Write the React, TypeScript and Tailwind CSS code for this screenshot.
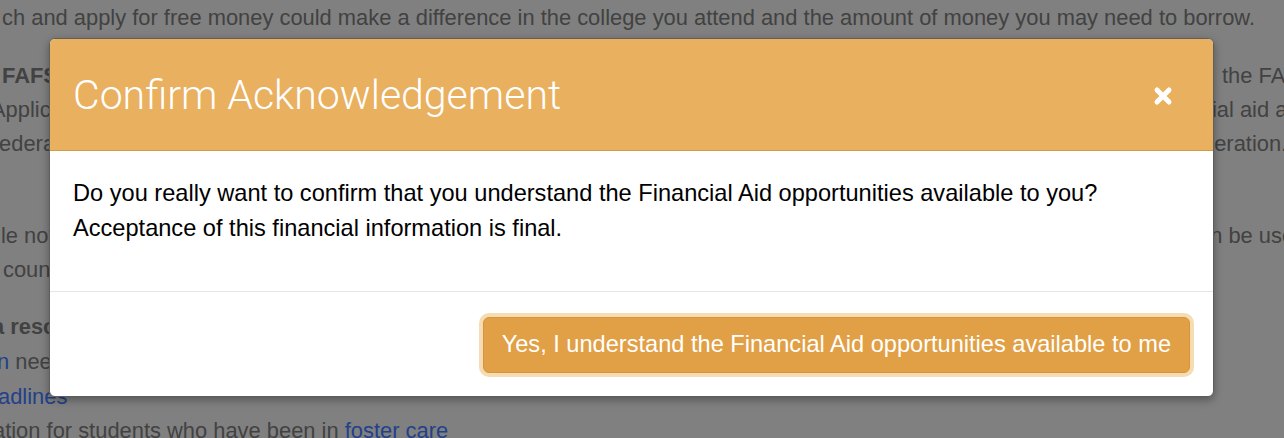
import React from "react";

const F = { fontFamily: '"Liberation Sans", Arial, sans-serif' };
const R = { fontFamily: 'Roboto, "Liberation Sans", Arial, sans-serif' };

function Row({ left, right, className = "" }: { left?: React.ReactNode; right?: React.ReactNode; className?: string }) {
  return (
    <div className={"h-[34px] leading-[34px] flex justify-between whitespace-nowrap " + className}>
      <div className="w-[49px] overflow-hidden">{left}</div>
      {right}
    </div>
  );
}

export default function App() {
  return (
    <div className="relative w-[1284px] h-[438px] overflow-hidden bg-[#808080] text-[#424242]" style={F}>
      {/* Background page (dimmed) */}
      <div className="flex flex-col text-[21.9px]">
        <div className="h-[34px] leading-[34px] mt-[1px] pl-[2px] whitespace-nowrap">
          ch and apply for free money could make a difference in the college you attend and the amount of money you may need to borrow.
        </div>
        <Row
          className="mt-[24px]"
          left={<span className="font-bold pl-[2px]">FAFSA</span>}
          right={<span className="w-[62px] overflow-hidden">the FAFSA</span>}
        />
        <Row
          left={<span className="block -ml-[9px]">Application</span>}
          right={<span className="w-[83px] overflow-hidden">cial aid and</span>}
        />
        <Row
          left={<span className="block -ml-[7px]">federal</span>}
          right={<span className="w-[82px] overflow-hidden">deration.</span>}
        />
        <Row
          className="mt-[58px]"
          left={<span className="block pl-[1px]">le not</span>}
          right={<span className="w-[86px] overflow-hidden">an be used</span>}
        />
        <Row left={<span className="block pl-[3px]">counsel</span>} />
        <Row
          className="mt-[23px]"
          left={<span className="block font-bold -ml-[8px]">a resources</span>}
        />
        <Row
          className="mt-[1px]"
          left={
            <span className="block -ml-[3px]">
              <span className="text-[#23418a]">n</span> needs
            </span>
          }
        />
        <div className="h-[34px] leading-[34px] mt-[1px] whitespace-nowrap">
          <span className="text-[#23418a] -ml-[2px]">adlines</span>
        </div>
        <div className="h-[34px] leading-[34px] whitespace-nowrap">
          <span className="-ml-[7px]">ation for students who have been in </span>
          <span className="text-[#23418a]">foster care</span>
        </div>
      </div>

      {/* Modal */}
      <div className="absolute left-[49px] top-[38px] w-[1165px] rounded-[6px] border border-[#5e5e5e] bg-white overflow-hidden shadow-[0_3px_9px_rgba(0,0,0,0.35)]">
        <div className="h-[112px] bg-[#e8b05f] border-b border-[#d39a4a] flex items-center justify-between pl-[23px] pr-[40px]">
          <h2 className="text-[41px] leading-none text-white font-light pt-[2px]" style={R}>
            Confirm Acknowledgement
          </h2>
          <svg width="20" height="20" viewBox="0 0 20 20" className="mt-[2px]">
            <path d="M4 4 L16 16 M16 4 L4 16" stroke="white" strokeWidth="5" strokeLinecap="round" />
          </svg>
        </div>
        <div className="h-[141px] border-b border-[#e5e5e5] pl-[23px] pt-[25px] text-[23.6px] leading-[35px] text-black">
          <p className="whitespace-nowrap">Do you really want to confirm that you understand the Financial Aid opportunities available to you?</p>
          <p>Acceptance of this financial information is final.</p>
        </div>
        <div className="h-[104px] flex items-center justify-end pr-[23px] pt-[2px]">
          <button className="h-[56px] px-[18px] rounded-[6px] bg-[#e1a045] text-white text-[23.6px] border border-[#d89537] shadow-[0_0_0_4px_#f5dcb3] whitespace-nowrap">
            Yes, I understand the Financial Aid opportunities available to me
          </button>
        </div>
      </div>
    </div>
  );
}
